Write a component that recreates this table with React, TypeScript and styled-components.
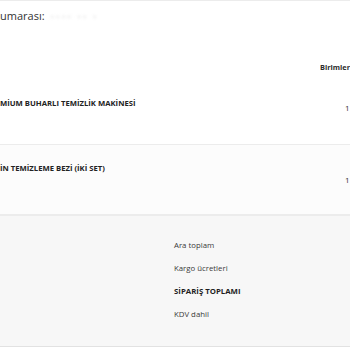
import React from "react";
import styled, { createGlobalStyle } from "styled-components";

const Global = createGlobalStyle`
  html, body { margin: 0; padding: 0; background: #ffffff; overflow: hidden; }
  body { font-family: "Open Sans", "Noto Sans", sans-serif; color: #2b2b2b; }
`;

const Page = styled.div`
  width: 350px;
  overflow: hidden;
  border-top: 1px solid #ececec;
`;

const OrderLine = styled.div`
  height: 40px;
  padding-top: 7px;
  box-sizing: border-box;
  font-size: 11px;
  line-height: 16px;
  color: #333;
  display: flex;
  gap: 6px;
`;

const Redacted = styled.span`
  color: #ededed;
  filter: blur(1.5px);
  letter-spacing: 2px;
  font-size: 10px;
`;

const Row = styled.div<{ $height: number; $bg?: string; $pad: number }>`
  display: grid;
  grid-template-columns: 320px 30px;
  height: ${(p) => p.$height}px;
  padding-top: ${(p) => p.$pad}px;
  box-sizing: border-box;
  background: ${(p) => p.$bg || "transparent"};
  border-bottom: ${(p) => (p.$bg === undefined ? "none" : "1px solid #ececec")};
`;

const HeadCell = styled.div`
  font-size: 7.4px;
  font-weight: 700;
  line-height: 12px;
  color: #2b2b2b;
  white-space: nowrap;
`;

const NameCell = styled.div`
  font-size: 7.7px;
  font-weight: 700;
  line-height: 12px;
  color: #222;
  white-space: nowrap;
`;

const QtyCell = styled.div<{ $offset: number }>`
  font-size: 8px;
  line-height: 12px;
  color: #333;
  padding-left: 25px;
  padding-top: ${(p) => p.$offset}px;
`;

const Summary = styled.div`
  height: 132px;
  background: #f7f7f7;
  border-top: 1px solid #ececec;
  border-bottom: 1px solid #e2e2e2;
  box-sizing: border-box;
  padding: 23px 0 0 174px;
  display: flex;
  flex-direction: column;
  gap: 11px;
`;

const SumLabel = styled.div<{ $bold?: boolean }>`
  font-size: 7.8px;
  line-height: 12px;
  font-weight: ${(p) => (p.$bold ? 700 : 400)};
  color: ${(p) => (p.$bold ? "#1f1f1f" : "#3a3a3a")};
`;

export default function App() {
  return (
    <>
      <Global />
      <Page>
        <OrderLine>
          <span>umarası:</span>
          <Redacted>▪▪▪▪ ▪▪ ▪</Redacted>
        </OrderLine>
        <Row $height={56} $pad={20}>
          <div />
          <HeadCell>Birimler</HeadCell>
        </Row>
        <Row $height={48} $pad={0} $bg="#ffffff">
          <NameCell>MİUM BUHARLI TEMİZLİK MAKİNESİ</NameCell>
          <QtyCell $offset={5}>1</QtyCell>
        </Row>
        <Row $height={70} $pad={17} $bg="#fcfcfc">
          <NameCell>İN TEMİZLEME BEZİ (İKİ SET)</NameCell>
          <QtyCell $offset={12}>1</QtyCell>
        </Row>
        <Summary>
          <SumLabel>Ara toplam</SumLabel>
          <SumLabel>Kargo ücretleri</SumLabel>
          <SumLabel $bold>SİPARİŞ TOPLAMI</SumLabel>
          <SumLabel>KDV dahil</SumLabel>
        </Summary>
      </Page>
    </>
  );
}
